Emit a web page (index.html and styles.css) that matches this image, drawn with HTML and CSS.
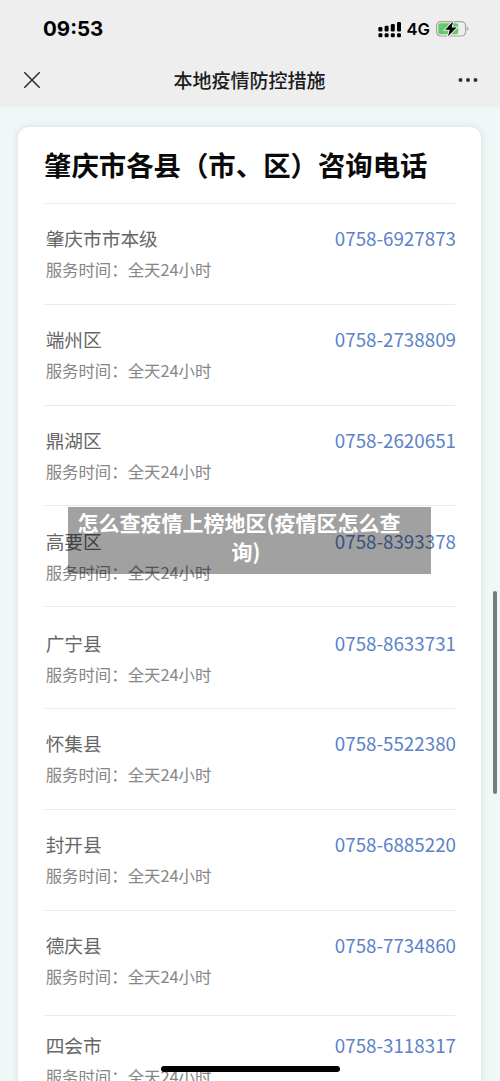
FILE: index.html
```html
<!DOCTYPE html>
<html lang="zh-CN">
<head>
<meta charset="utf-8">
<title>本地疫情防控措施</title>
<link rel="stylesheet" href="styles.css">
</head>
<body>
<header class="top">
  <div class="status">
    <span class="clock">09:53</span>
    <div class="indicators">
      <svg class="signal" width="24" height="17" viewBox="0 0 24 17">
        <rect x="0.4" y="6" width="4" height="4.5" rx="1.2"/><rect x="6.6" y="4.8" width="4" height="5.7" rx="1.2"/><rect x="12.8" y="3" width="4" height="7.5" rx="1.2"/><rect x="19" y="1" width="4" height="9.5" rx="1.2"/>
        <rect x="0.4" y="12.3" width="4" height="4" rx="1.2"/><rect x="6.6" y="12.3" width="4" height="4" rx="1.2"/><rect x="12.8" y="12.3" width="4" height="4" rx="1.2"/><rect x="19" y="12.3" width="4" height="4" rx="1.2"/>
      </svg>
      <span class="network">4G</span>
      <svg class="battery" width="33" height="18" viewBox="0 0 33 18">
        <rect x="0.6" y="1.6" width="29" height="14.4" rx="4.3" fill="none" stroke="#a5a5a5" stroke-width="1.2"/>
        <rect x="2.3" y="3.3" width="20" height="11" rx="2.6" fill="#62ca68"/>
        <path d="M30.9 6.5Q32.4 7.3 32.4 8.8Q32.4 10.3 30.9 11.1Z" fill="#a5a5a5"/>
        <path d="M17 1.6L9.2 9.8H13.8L12 16.2L20.6 7.6H15.6Z" fill="#000" stroke="#eee" stroke-width="2" paint-order="stroke"/>
      </svg>
    </div>
  </div>
  <div class="nav">
    <svg class="close" width="18" height="18" viewBox="0 0 18 18"><path d="M1.3 1.3L16.7 16.7M16.7 1.3L1.3 16.7" fill="none" stroke="#303030" stroke-width="1.6"/></svg>
    <h1 class="nav-title">本地疫情防控措施</h1>
    <svg class="more" width="20" height="6" viewBox="0 0 20 6" fill="#303030"><circle cx="2.5" cy="3" r="2"/><circle cx="10" cy="3" r="2"/><circle cx="17.5" cy="3" r="2"/></svg>
  </div>
</header>
<main class="card">
  <h2 class="card-title">肇庆市各县（市、区）咨询电话</h2>
  <section class="row"><div class="line"><span>肇庆市市本级</span><span class="phone">0758-6927873</span></div><p class="hours">服务时间：全天24小时</p></section>
  <section class="row"><div class="line"><span>端州区</span><span class="phone">0758-2738809</span></div><p class="hours">服务时间：全天24小时</p></section>
  <section class="row"><div class="line"><span>鼎湖区</span><span class="phone">0758-2620651</span></div><p class="hours">服务时间：全天24小时</p></section>
  <section class="row row-low"><div class="line"><span>高要区</span><span class="phone">0758-8393378</span></div><p class="hours">服务时间：全天24小时</p></section>
  <section class="row row-mid"><div class="line"><span>广宁县</span><span class="phone">0758-8633731</span></div><p class="hours">服务时间：全天24小时</p></section>
  <section class="row"><div class="line"><span>怀集县</span><span class="phone">0758-5522380</span></div><p class="hours">服务时间：全天24小时</p></section>
  <section class="row"><div class="line"><span>封开县</span><span class="phone">0758-6885220</span></div><p class="hours">服务时间：全天24小时</p></section>
  <section class="row row-tall"><div class="line"><span>德庆县</span><span class="phone">0758-7734860</span></div><p class="hours">服务时间：全天24小时</p></section>
  <section class="row row-last"><div class="line"><span>四会市</span><span class="phone">0758-3118317</span></div><p class="hours">服务时间：全天24小时</p></section>
</main>
<div class="banner"><div>怎么查疫情上榜地区(疫情区怎么查</div><div class="banner-end">询)</div></div>
<div class="scrollbar"></div>
<div class="home-bar"></div>
</body>
</html>
```
FILE: styles.css
```css
* { box-sizing: border-box; }
html, body { margin: 0; height: 1081px; overflow: hidden; }
body {
  position: relative;
  background: #f0f7f7;
  font-family: "Noto Sans CJK SC", "Noto Sans", sans-serif;
}
h1, h2, p { margin: 0; }
.top { height: 107px; background: #eee; color: #000; }
.status {
  height: 54px;
  padding: 3px 32px 0 43px;
  display: flex;
  align-items: center;
  justify-content: space-between;
}
.clock { font: 700 20.5px/24px Inter, sans-serif; }
.indicators { display: flex; align-items: center; }
.signal { margin-top: 1px; }
.network { font: 600 16.6px/20px Inter, sans-serif; margin: 1px 6px 0 5px; }
.battery { margin-right: -1px; }
.nav {
  height: 52px;
  padding: 0 22px 0 23px;
  display: flex;
  align-items: center;
  justify-content: space-between;
}
.nav-title { font-size: 19px; line-height: 28px; font-weight: 500; color: #1c1c1c; }
.card {
  margin: 20px 19px 0 18px;
  height: 970px;
  padding: 0 26px 0 27px;
  background: #fff;
  border-radius: 11px;
  box-shadow: 0 0 7px rgba(60, 80, 80, 0.16);
}
.card-title {
  height: 76px;
  margin-left: -1px;
  line-height: 74px;
  font-size: 27.4px;
  font-weight: 700;
  color: #0a0a0a;
  white-space: nowrap;
}
.row { height: 100.8px; padding-top: 20px; border-top: 1.5px solid #e9e9e9; }
.row-low { padding-top: 20.7px; }
.row-mid { height: 102px; padding-top: 22px; }
.row-tall { height: 105.5px; }
.row-last { height: 66px; padding-top: 15px; }
.line {
  height: 28px;
  padding-left: 0.7px;
  display: flex;
  align-items: center;
  justify-content: space-between;
  font-size: 18.7px;
  line-height: 28px;
  color: #666;
}
.phone { font-size: 18.8px; color: #5b82c8; margin-right: -1px; }
.hours { margin-top: 5px; padding-left: 0.7px; font-size: 16.4px; line-height: 24px; color: #868686; }
.banner {
  position: absolute;
  left: 68px;
  top: 507px;
  width: 363px;
  height: 67px;
  padding: 1px 21px 0 0;
  background: rgba(0, 0, 0, 0.37);
  color: #fff;
  font-size: 21px;
  line-height: 28.5px;
  font-weight: 700;
  text-align: center;
  white-space: nowrap;
}
.banner-end { padding-left: 14px; }
.scrollbar {
  position: absolute;
  left: 493px;
  top: 591px;
  width: 4px;
  height: 203px;
  border-radius: 2px;
  background: #787c7d;
}
.home-bar {
  position: absolute;
  left: 161px;
  top: 1066px;
  width: 179px;
  height: 5.5px;
  border-radius: 3px;
  background: #000;
}
```
